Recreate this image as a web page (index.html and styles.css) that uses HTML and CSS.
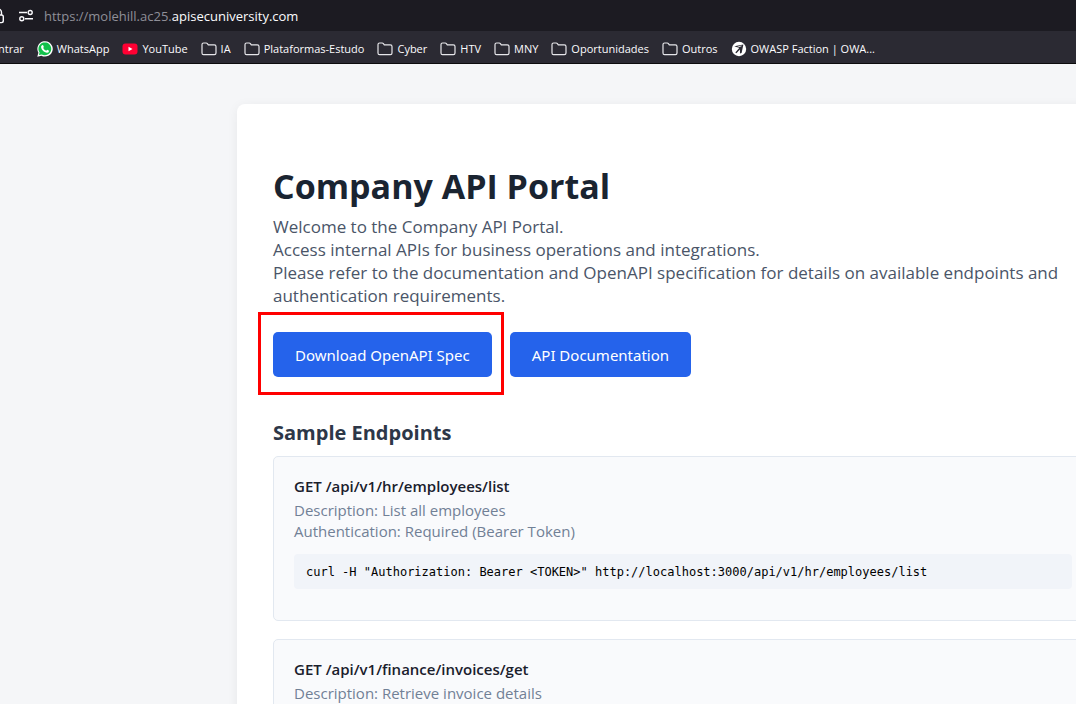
FILE: index.html
```html
<!DOCTYPE html>
<html lang="en">
<head>
<meta charset="utf-8">
<title>Company API Portal</title>
<link rel="stylesheet" href="styles.css">
</head>
<body>
<svg class="defs" aria-hidden="true">
  <symbol id="folder" viewBox="0 0 16 16"><path d="M1 3.6Q1 2 2.600 2H5.200Q5.900 2 6.400 2.600L7.300 3.800H13.300Q15 3.800 15 5.400V12Q15 13.600 13.400 13.600H2.600Q1 13.600 1 12Z" fill="none" stroke="#e6e6ea" stroke-width="1.200"/></symbol>
</svg>
<header class="browser">
  <div class="address">
    <svg class="lock" viewBox="0 0 16 16" aria-hidden="true"><path d="M4.500 7V4.500a3.500 3.500 0 0 1 7 0V7M4.500 7H11.500Q13.300 7 13.300 8.800V12.800Q13.300 14.600 11.500 14.600H4.500Q2.700 14.600 2.700 12.800V8.800Q2.700 7 4.500 7Z" fill="none" stroke="#fbfbfe" stroke-width="1.400"/></svg>
    <svg class="tune" viewBox="0 0 16 16" aria-hidden="true"><g fill="none" stroke="#fbfbfe" stroke-width="1.400"><path d="M1 4.500H9M7 10.700H15"/><circle cx="12.200" cy="4.500" r="2"/><circle cx="3.800" cy="10.700" r="2"/></g></svg>
    <span class="url">https://molehill.ac25.<b class="domain">apisecuniversity.com</b></span>
  </div>
  <nav class="bookmarks" aria-label="Bookmarks">
    <a class="bookmark" href="#">ntrar</a>
    <a class="bookmark" href="#"><svg class="icon" viewBox="0 0 16 16" aria-hidden="true"><path d="M.3 15.700 1.400 11.800A7.700 7.700 0 1 1 4.400 14.700Z" fill="#fff"/><path d="M1.900 14.100 2.600 11.500A6.400 6.400 0 1 1 4.700 13.400Z" fill="#12c04b"/><path d="M5 4.200Q5.900 3.600 6.300 4.600L6.800 5.900 6.200 6.900Q7.200 8.900 9.200 9.700L10.200 8.800 12 9.700Q12.200 11.500 10.200 11.800C7.300 11.900 3.700 8.300 4.100 5.600Q4.200 4.800 5 4.200Z" fill="#fff"/></svg>WhatsApp</a>
    <a class="bookmark" href="#"><svg class="icon" viewBox="0 0 16 16" aria-hidden="true"><rect x=".5" y="2.500" width="15" height="11" rx="3" fill="#ff0033"/><path d="M6.500 5.700 10.500 8 6.500 10.300Z" fill="#fff"/></svg>YouTube</a>
    <a class="bookmark" href="#"><svg class="icon" aria-hidden="true"><use href="#folder"/></svg>IA</a>
    <a class="bookmark" href="#"><svg class="icon" aria-hidden="true"><use href="#folder"/></svg>Plataformas-Estudo</a>
    <a class="bookmark" href="#"><svg class="icon" aria-hidden="true"><use href="#folder"/></svg>Cyber</a>
    <a class="bookmark" href="#"><svg class="icon" aria-hidden="true"><use href="#folder"/></svg>HTV</a>
    <a class="bookmark" href="#"><svg class="icon" aria-hidden="true"><use href="#folder"/></svg>MNY</a>
    <a class="bookmark" href="#"><svg class="icon" aria-hidden="true"><use href="#folder"/></svg>Oportunidades</a>
    <a class="bookmark" href="#"><svg class="icon" aria-hidden="true"><use href="#folder"/></svg>Outros</a>
    <a class="bookmark" href="#"><svg class="icon" viewBox="0 0 16 16" aria-hidden="true"><circle cx="8" cy="8" r="7.200" fill="#fff"/><path d="M3.300 5.200 12.400 3.500 10.600 12 9 12.600 8.900 8.600 5.400 12.300 4.300 11.500 8.200 6.900Z" fill="#2b2a33"/><path d="M6.500 6.100 10.500 4.900" stroke="#fff" stroke-width=".8"/></svg>OWASP Faction | OWA...</a>
  </nav>
</header>
<main class="portal">
  <h1 class="title">Company API Portal</h1>
  <p class="intro">Welcome to the Company API Portal.<br>Access internal APIs for business operations and integrations.<br>Please refer to the documentation and OpenAPI specification for details on available endpoints and authentication requirements.</p>
  <div class="actions">
    <div class="highlighted"><a class="button" href="#">Download OpenAPI Spec</a></div>
    <a class="button" href="#">API Documentation</a>
  </div>
  <h2 class="section-title">Sample Endpoints</h2>
  <section class="endpoint">
    <h3 class="endpoint-name">GET /api/v1/hr/employees/list</h3>
    <p class="endpoint-info">Description: List all employees<br>Authentication: Required (Bearer Token)</p>
    <pre class="code">curl -H "Authorization: Bearer &lt;TOKEN&gt;" http://localhost:3000/api/v1/hr/employees/list</pre>
  </section>
  <section class="endpoint">
    <h3 class="endpoint-name">GET /api/v1/finance/invoices/get</h3>
    <p class="endpoint-info">Description: Retrieve invoice details</p>
  </section>
</main>
</body>
</html>
```
FILE: styles.css
```css
* { box-sizing: border-box; }
html { height: 100%; overflow: hidden; }
body {
  margin: 0;
  height: 100%;
  overflow: hidden;
  display: flex;
  flex-direction: column;
  background: #f5f6f8;
  font-family: "Open Sans", "Noto Sans", sans-serif;
}
h1, h2, h3, p, pre { margin: 0; }
a { text-decoration: none; }
.defs { position: absolute; width: 0; height: 0; }

.browser { flex: none; color: #fbfbfe; background: #2b2a33; border-bottom: 1px solid #0c0c0d; }
.address {
  display: flex;
  align-items: center;
  height: 31px;
  background: #1c1b22;
}
.lock { flex: none; width: 16px; height: 16px; margin-left: -10px; }
.tune { flex: none; width: 16px; height: 16px; margin: 0 10px 0 12px; }
.url { font-size: 13px; color: #8f8f98; white-space: nowrap; }
.domain { font-weight: 400; color: #fbfbfe; }
.bookmarks { display: flex; align-items: center; gap: 13px; height: 32px; padding-top: 4px; }
.bookmark {
  display: flex;
  align-items: center;
  gap: 4px;
  color: #fbfbfe;
  font-size: 11px;
  line-height: 16px;
  white-space: nowrap;
}
.bookmark:first-child { margin-left: -2px; }
.icon { flex: none; width: 16px; height: 16px; }

.portal {
  flex: 1 0 auto;
  margin: 40px -53px 0 237px;
  padding: 60px 36px 0;
  background: #fff;
  border-radius: 8px 8px 0 0;
  box-shadow: 0 2px 12px rgba(0, 0, 0, 0.06);
}
.title { font-size: 34px; line-height: 44px; font-weight: 700; color: #1a2431; }
.intro { margin-top: 7px; font-size: 17px; line-height: 23px; color: #4a5568; }
.actions { display: flex; gap: 18px; margin-top: 25px; }
.highlighted { position: relative; }
.highlighted::after {
  content: "";
  position: absolute;
  inset: -20px -12px -18px -15px;
  border: 3px solid #f00;
  pointer-events: none;
}
.button {
  display: block;
  padding: 12px 22px 10px;
  border-radius: 5px;
  background: #2563eb;
  color: #fff;
  font-family: "Noto Sans", "Open Sans", sans-serif;
  font-size: 15px;
  line-height: 23px;
}
.section-title { margin-top: 42px; font-size: 20px; line-height: 28px; font-weight: 700; color: #2d3748; }
.endpoint {
  margin-top: 9px;
  padding: 19px 20px 20px;
  background: #f9fafc;
  border: 1px solid #e2e8f0;
  border-radius: 5px;
}
.endpoint + .endpoint { margin-top: 18px; }
.endpoint-name { font-size: 15px; line-height: 21px; font-weight: 600; color: #1a202c; }
.endpoint-info { margin-top: 3px; font-size: 15px; line-height: 21px; color: #718096; }
.code {
  margin: 12px 0 11px;
  padding: 10px 12px 8px;
  border-radius: 4px;
  background: #f1f4f9;
  color: #000;
  font-family: "DejaVu Sans Mono", "Liberation Mono", monospace;
  font-size: 12px;
  line-height: 17px;
}
```
